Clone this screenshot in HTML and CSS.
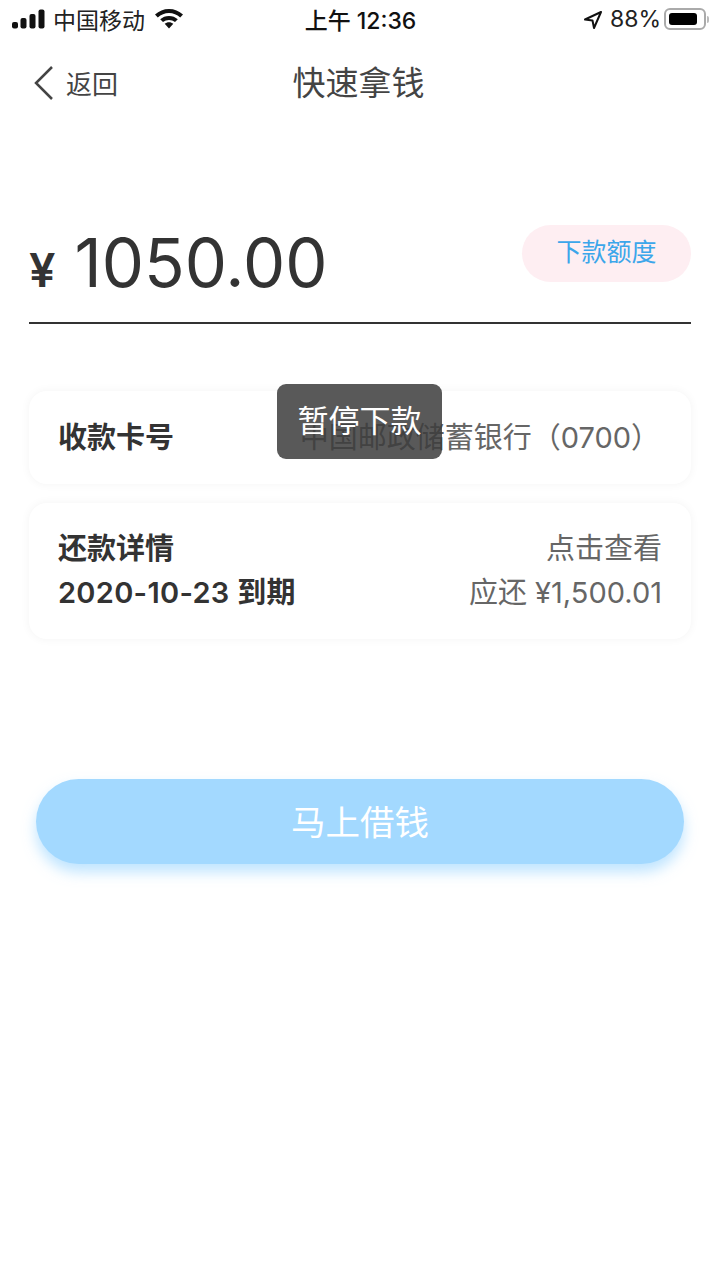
FILE: index.html
```html
<!DOCTYPE html>
<html>
  <head>
    <meta charset="utf-8" />
    <link rel="stylesheet" href="styles.css">
  </head>
  <body>
    <div class="statusbar">
      <div class="status-left">
        <svg class="signal" width="33" height="20" viewBox="0 0 33 20">
          <rect x="0" y="13" width="6" height="6.500" rx="2" />
          <rect x="8.500" y="9" width="6" height="10.500" rx="2" />
          <rect x="17.500" y="5" width="6" height="14.500" rx="2" />
          <rect x="26.500" y="0.500" width="6" height="19" rx="2" />
        </svg>
        <span class="carrier">中国移动</span>
        <svg class="wifi" width="30" height="22" viewBox="0 0 30 22">
          <path d="M15 2C9.600 2 5 4 1 7.600l2.800 3C7 7.700 10.800 6.100 15 6.100s8 1.600 11.200 4.500l2.800-3C25 4 20.400 2 15 2z" />
          <path d="M15 8.900c-3.400 0-6.400 1.200-8.800 3.300l2.800 2.900c1.700-1.400 3.700-2.200 6-2.200s4.300.8 6 2.200l2.800-2.900c-2.400-2.100-5.400-3.300-8.800-3.300z" />
          <path d="M15 15.200c-1.700 0-3.100.6-4.300 1.500L15 21.500l4.300-4.800c-1.200-.9-2.600-1.500-4.300-1.500z" />
        </svg>
      </div>
      <div class="status-time">上午 12:36</div>
      <div class="status-right">
        <svg class="arrow" width="20" height="20" viewBox="0 0 20 20">
          <path d="M18 2L2 9.500l7.500 1 1.500 7.500z" />
        </svg>
        <span class="battery-text">88%</span>
        <div class="battery"><div class="battery-fill"></div></div>
        <div class="battery-cap"></div>
      </div>
    </div>

    <div class="nav">
      <div class="back">
        <svg width="22" height="36" viewBox="0 0 22 36">
          <path d="M20 2L4 18l16 16" />
        </svg>
        <span>返回</span>
      </div>
      <div class="nav-title">快速拿钱</div>
    </div>

    <div class="amount-row">
      <div class="amount">
        <span class="currency">¥</span>
        <span class="value">1050.00</span>
      </div>
      <div class="limit-chip">下款额度</div>
    </div>

    <div class="cards">
      <div class="card card-account">
        <div class="label">收款卡号</div>
        <div class="muted">中国邮政储蓄银行（0700）</div>
      </div>
      <div class="card card-repay">
        <div class="repay-line">
          <div class="label">还款详情</div>
          <div class="muted">点击查看</div>
        </div>
        <div class="repay-line">
          <div class="label date">2020-10-23 到期</div>
          <div class="muted">应还 ¥1,500.01</div>
        </div>
      </div>
      <div class="toast">暂停下款</div>
    </div>

    <button class="borrow-btn">马上借钱</button>
  </body>
</html>
```

FILE: styles.css
```css
* {
  box-sizing: border-box;
}

body {
  margin: 0;
  width: 720px;
  height: 1280px;
  overflow: hidden;
  background: #fff;
  color: #333;
  font-family: Inter, "Noto Sans CJK SC", sans-serif;
}

.statusbar {
  display: grid;
  grid-template-columns: 1fr auto 1fr;
  align-items: center;
  height: 40px;
  padding: 0 11px 3px 12px;
  color: #111;
  font-size: 23px;
}

.status-left {
  display: flex;
  align-items: center;
}

.signal {
  fill: #111;
}

.carrier {
  margin-left: 8px;
  color: #222;
}

.wifi {
  margin-left: 9px;
  margin-top: -2px;
  fill: #111;
}

.status-time {
  font-weight: 500;
}

.status-right {
  display: flex;
  align-items: center;
  justify-content: flex-end;
  padding-top: 1px;
}

.arrow {
  margin-top: 1px;
  fill: none;
  stroke: #111;
  stroke-width: 2;
  stroke-linejoin: round;
}

.battery-text {
  margin-left: 7px;
  margin-right: -1px;
  color: #222;
}

.battery {
  width: 42px;
  height: 22px;
  margin-left: 4px;
  padding: 3px;
  border: 2px solid #aaa;
  border-radius: 6px;
}

.battery-fill {
  width: 87%;
  height: 100%;
  background: #000;
  border-radius: 3px;
}

.battery-cap {
  width: 2px;
  height: 7px;
  margin-left: 1px;
  background: #bbb;
  border-radius: 0 2px 2px 0;
}

.nav {
  position: relative;
  display: flex;
  align-items: center;
  justify-content: center;
  height: 86px;
  padding-bottom: 5px;
}

.back {
  position: absolute;
  left: 32px;
  top: 24px;
  display: flex;
  align-items: center;
  gap: 12px;
  font-size: 26px;
  color: #444;
}

.back svg {
  fill: none;
  stroke: #444;
  stroke-width: 2.500;
}

.nav-title {
  margin-right: 3px;
  font-size: 33px;
  color: #444;
}

.amount-row {
  display: flex;
  justify-content: space-between;
  align-items: flex-start;
  height: 198px;
  margin: 0 29px;
  padding-top: 99px;
  border-bottom: 2px solid #333;
}

.amount {
  display: flex;
  align-items: baseline;
  height: 80px;
  line-height: 75px;
}

.currency {
  font-size: 47px;
  font-weight: 600;
  margin-right: 19px;
}

.value {
  font-size: 67px;
}

.limit-chip {
  width: 169px;
  height: 57px;
  line-height: 55px;
  text-align: center;
  font-size: 25px;
  color: #3ca6ea;
  background: #feeef2;
  border-radius: 29px;
}

.cards {
  position: relative;
  display: flex;
  flex-direction: column;
  gap: 19px;
  margin: 67px 29px 0;
}

.card {
  background: #fff;
  border-radius: 18px;
  box-shadow: 0 0 10px rgba(0, 0, 0, 0.05);
  padding: 0 29px;
  font-size: 29px;
}

.card-account {
  display: flex;
  justify-content: space-between;
  align-items: center;
  height: 93px;
  padding-bottom: 5px;
}

.card-repay {
  display: flex;
  flex-direction: column;
  justify-content: center;
  gap: 8px;
  height: 136px;
}

.repay-line {
  display: flex;
  justify-content: space-between;
  height: 36px;
  line-height: 36px;
}

.label {
  font-weight: 600;
  color: #333;
}

.date {
  letter-spacing: 0.300px;
}

.muted {
  color: #666;
}

.card-account .muted {
  margin-right: 2px;
}

.toast {
  position: absolute;
  left: 248px;
  top: -7px;
  width: 165px;
  height: 75px;
  padding-top: 17px;
  text-align: center;
  font-size: 31px;
  line-height: 40px;
  color: #fff;
  background: rgba(60, 60, 60, 0.85);
  border-radius: 9px;
}

.borrow-btn {
  display: block;
  width: 648px;
  height: 85px;
  margin: 140px 36px 0;
  padding-bottom: 4px;
  border: none;
  border-radius: 43px;
  background: #a3d9ff;
  color: #fff;
  font-family: inherit;
  font-size: 34.500px;
  box-shadow: 0 8px 14px rgba(163, 217, 255, 0.7);
}
```
